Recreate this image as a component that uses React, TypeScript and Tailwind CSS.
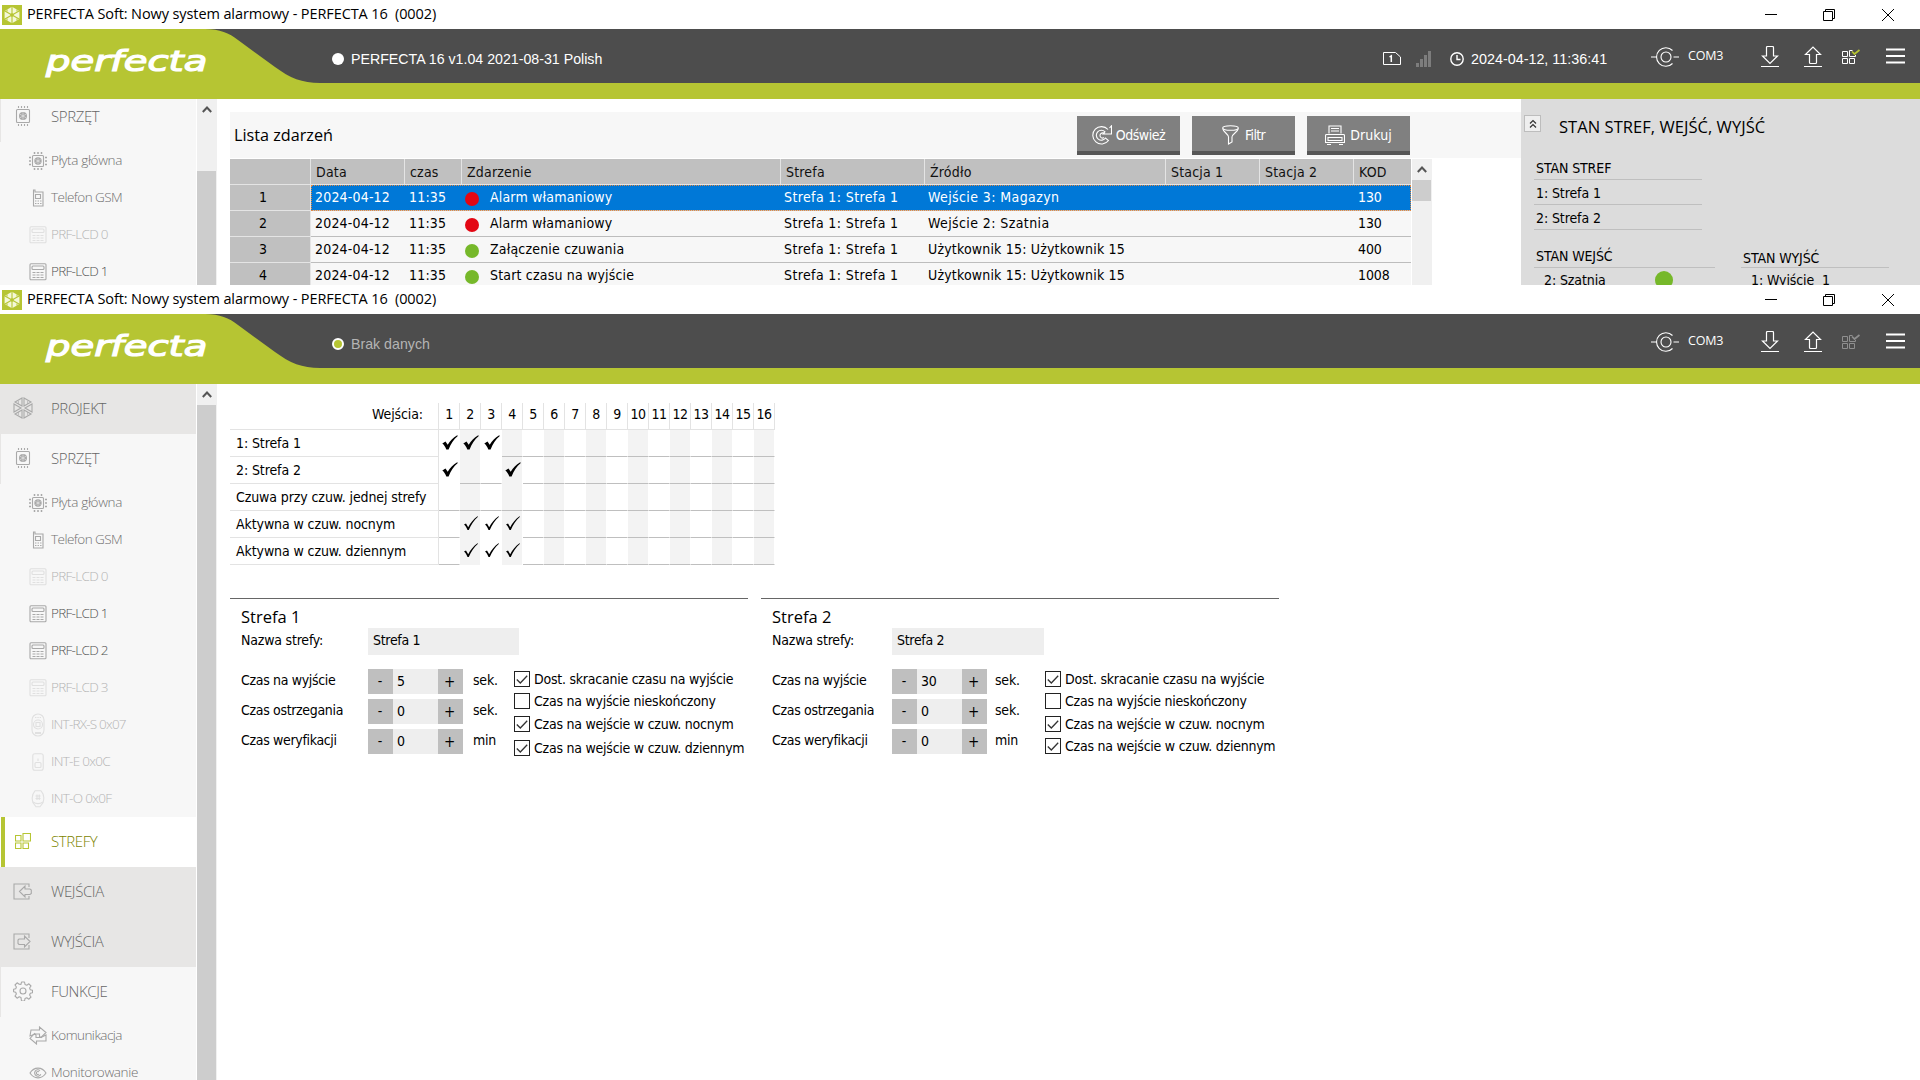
import React from 'react';

type IconProps = { className?: string };
type Kind =
  | 'project' | 'chip' | 'board' | 'phone' | 'keypad' | 'remote' | 'expIn' | 'expOut'
  | 'zones' | 'inputs' | 'outputs' | 'gear' | 'comm' | 'eye';

const TAHOMA = "font-['DejaVu_Sans_Condensed','DejaVu_Sans',sans-serif]";
const SEGOE = "font-['Open_Sans','Noto_Sans',sans-serif]";
const ARIAL = "font-['Liberation_Sans',Arial,sans-serif]";

function AppIcon() {
  return (
    <svg viewBox="0 0 20 20" className="h-5 w-5 shrink-0">
      <rect width="20" height="20" fill="#b6c533" />
      <path d="M10 1.8 17.4 6v8L10 18.2 2.6 14V6z" fill="#f4f8d8" />
      <g stroke="#b6c533" strokeWidth="1.1">
        <path d="M10 1v18M2 5.5l16 9M18 5.5l-16 9" />
      </g>
      <circle cx="10" cy="10" r="1.8" fill="#b6c533" />
      <path d="M5 4.5v2M15 4.5v2M5 13.5v2M15 13.5v2" stroke="#b6c533" />
    </svg>
  );
}

function SideIcon({ kind, className = '' }: IconProps & { kind: Kind }) {
  const common = { fill: 'none', stroke: 'currentColor', strokeWidth: 1.1 };
  switch (kind) {
    case 'project':
      return (
        <svg viewBox="0 0 20 22" className={`h-[22px] w-5 ${className}`} {...common}>
          <path d="M9 1v8L2 5zM11 1v8l7-4zM1 7l7 4-7 4zM19 7l-7 4 7 4zM9 21v-8l-7 4zM11 21v-8l7 4z" />
          <path d="M5.500 4v3M14.500 4v3M5.500 15v3M14.500 15v3" strokeWidth=".6" />
        </svg>
      );
    case 'chip':
      return (
        <svg viewBox="0 0 20 20" className={`h-5 w-5 ${className}`} {...common}>
          <rect x="3.500" y="3.500" width="13" height="13" rx="1" />
          <circle cx="10" cy="10" r="4" fill="currentColor" stroke="none" />
          <path d="M10 6.400v7.200M6.900 8.200l6.200 3.600M13.100 8.200l-6.200 3.600" stroke="#f7f7f7" strokeWidth=".5" />
          <path d="M5.500 0v2M8.500 0v2M11.500 0v2M14.500 0v2M5.500 18v2M8.500 18v2M11.500 18v2M14.500 18v2" />
        </svg>
      );
    case 'board':
      return (
        <svg viewBox="0 0 18 18" className={`h-[18px] w-[18px] ${className}`} {...common}>
          <rect x="3.500" y="3.500" width="11" height="11" rx="1" />
          <circle cx="9" cy="9" r="3.700" fill="currentColor" stroke="none" />
          <path d="M9 6v6M6.500 7.500l5 3M11.500 7.500l-5 3" stroke="#f7f7f7" strokeWidth=".5" />
          <path d="M5.500 0v2M9 0v2M12.500 0v2M5.500 16v2M9 16v2M12.500 16v2M0 5.500h2M0 9h2M0 12.500h2M16 5.500h2M16 9h2M16 12.500h2" strokeWidth="1.500" />
        </svg>
      );
    case 'phone':
      return (
        <svg viewBox="0 0 12 18" className={`h-[18px] w-3 ${className}`} {...common}>
          <path d="M1.500 17V1h1.500v2h8v14z" />
          <path d="M3.500 5.500h5v4h-5zM3 12h6.500M3 14.500h6.500" />
          <path d="M5 11v5M7.500 11v5" stroke="#f7f7f7" />
        </svg>
      );
    case 'keypad':
      return (
        <svg viewBox="0 0 18 18" className={`h-[18px] w-[18px] ${className}`} {...common}>
          <rect x="1" y=".8" width="16" height="16" rx="1" />
          <rect x="3" y="3" width="12" height="3.500" rx="1" />
          <path d="M3.500 9.500h11M3.500 12h11M3.500 14.500h11" strokeDasharray="3 1" />
        </svg>
      );
    case 'remote':
      return (
        <svg viewBox="0 0 14 24" className={`h-6 w-3.5 ${className}`} {...common}>
          <rect x="1" y="1" width="12" height="22" rx="6" />
          <circle cx="7" cy="11.500" r="4.500" />
          <rect x="5" y="9.500" width="4" height="4" />
          <path d="M4 4.500h6" strokeDasharray="1.500 .8" />
          <path d="M4 20h6" strokeWidth="2" />
        </svg>
      );
    case 'expIn':
      return (
        <svg viewBox="0 0 12 18" className={`h-[18px] w-3 ${className}`} {...common}>
          <rect x=".8" y=".8" width="10.400" height="16.400" rx="2" />
          <rect x="3" y="9.500" width="6" height="5" rx="1" />
          <path d="M6 5.500v2.500" />
        </svg>
      );
    case 'expOut':
      return (
        <svg viewBox="0 0 14 18" className={`h-[18px] w-3.5 ${className}`} {...common}>
          <path d="M4 .8h6c3 3 3.200 8 2 12l-3 4H5l-3-4C.8 9 1 4 4 .800z" />
          <path d="M2 12c3 2 7 2 10 0M4.500 6h5M4.500 8.500h5M6 4.500v5.500M8.200 4.500v5.500" />
        </svg>
      );
    case 'zones':
      return (
        <svg viewBox="0 0 16 16" className={`h-4 w-4 ${className}`} {...common}>
          <path d="M.5 2.500h5.500v5.500H.5zM8 .5h7.500v7.500H8zM.5 10h5.500v5.500H.5zM8 10h5.500v5.500H8z" />
        </svg>
      );
    case 'inputs':
      return (
        <svg viewBox="0 0 19 17" className={`h-[17px] w-[19px] ${className}`} {...common}>
          <path d="M16 4V1H1v15h15v-3" />
          <path d="M6.500 8.500 12 3v3h5l1.300 1v3.500L17 11.500h-5V14z" />
        </svg>
      );
    case 'outputs':
      return (
        <svg viewBox="0 0 19 17" className={`h-[17px] w-[19px] ${className}`} {...common}>
          <path d="M16 5V1H1v15h15v-4" />
          <path d="M17 8.500 11.500 3v3H6L5 7v3.500l1 1h5.500V14z" />
        </svg>
      );
    case 'gear':
      return (
        <svg viewBox="0 0 20 20" className={`h-5 w-5 ${className}`} {...common} strokeLinejoin="round">
          <circle cx="10" cy="10" r="3" />
          <path d="M8.500 1h3l.5 2.400 1.800.8 2.100-1.400 2.100 2.200-1.400 2 .7 1.700 2.200.6v2.400l-2.200.6-.7 1.700 1.400 2-2.100 2.200-2.100-1.400-1.800.8-.5 2.400h-3L8 16.600l-1.800-.8-2.100 1.400L2 15l1.400-2-.7-1.700L.600 10.700V8.300l2.100-.6.7-1.700L2 4l2.100-2.200 2.100 1.400L8 3.400z" />
        </svg>
      );
    case 'comm':
      return (
        <svg viewBox="0 0 18 19" className={`h-[19px] w-[18px] ${className}`} {...common}>
          <path d="M1 10 2 4h8.500V1L17 6.500l-5 5-1.500-1V8H6z" />
          <path d="M17 9v6H7.500v3L1 12.500l4.500-5L7 9v2.500h5z" />
        </svg>
      );
    default:
      return (
        <svg viewBox="0 0 18 12" className={`h-3 w-[18px] ${className}`} {...common}>
          <path d="M1 6c4-6.500 12-6.500 16 0-4 6.500-12 6.500-16 0z" />
          <path d="M11 3.600a3.200 3.200 0 1 0 .8 3.600M10 5a1.500 1.500 0 1 0 0 2" />
        </svg>
      );
  }
}

function TitleBar() {
  return (
    <div className="flex h-[29px] shrink-0 items-center bg-white pl-[2px] pr-[26px]">
      <AppIcon />
      <span className={`${SEGOE} ml-[5px] whitespace-pre pb-px text-[14.500px] tracking-[-0.100px] text-black`}>
        {'PERFECTA Soft: Nowy system alarmowy - PERFECTA 16  (0002)'}
      </span>
      <div className="ml-auto flex items-center">
        <svg viewBox="0 0 12 12" className="h-3 w-3" stroke="#000" fill="none">
          <path d="M0 5.500h12" />
        </svg>
        <svg viewBox="0 0 12 12" className="ml-[46px] h-3 w-3" stroke="#000" fill="none">
          <path d="M.5 2.500h9v9h-9zM2.500 2.500v-2h9v9h-2" />
        </svg>
        <svg viewBox="0 0 12 12" className="ml-[47px] h-3 w-3" stroke="#000" fill="none">
          <path d="M0 0l12 12M12 0 0 12" />
        </svg>
      </div>
    </div>
  );
}

function Header({ online }: { online: boolean }) {
  return (
    <div className="shrink-0">
      <div className="relative flex h-[54px] bg-[#4d4d4d] pr-[15px] text-white">
        <svg viewBox="0 0 320 54" className="absolute left-0 top-0 h-[54px] w-[320px]">
          <path d="M0 0H205C220 0 229 4 238 11L275 38C290 49 302 54 320 54H0z" fill="#b6c533" />
        </svg>
        <div className="relative w-[332px] pl-[46px]">
          <span className="block origin-left scale-x-[1.330] pt-[14px] font-['DejaVu_Sans',sans-serif] text-[29px] italic leading-[36px] [-webkit-text-stroke:1.200px_#fff]">
            perfecta
          </span>
        </div>
        <div className="flex items-center pt-[6px]">
          <span
            className={
              online
                ? 'h-3 w-3 rounded-full bg-white'
                : 'h-3 w-3 rounded-full border-2 border-white bg-[#b6c533]'
            }
          />
          <span className={`${ARIAL} ml-[7px] pt-px text-[14.200px] ${online ? 'text-white' : 'text-[#b4b4b4]'}`}>
            {online ? 'PERFECTA 16 v1.04 2021-08-31 Polish' : 'Brak danych'}
          </span>
        </div>
        <div className="ml-auto flex items-center">
          {online && (
            <div className="mr-[44px] flex items-center pt-[6px]">
              <svg viewBox="0 0 18 13" className="h-[13px] w-[18px]" fill="none" stroke="#fff">
                <path d="M.5.500h12l5 4.500v7.500H.5z" />
                <path d="M6.500 5 8.300 3.800V10" strokeWidth="1.500" />
              </svg>
              <svg viewBox="0 0 15 16" className="ml-[15px] h-4 w-[15px]" fill="#7d7d7d">
                <path d="M0 12h3v4H0zM4 8h3v8H4zM8 4h3v12H8zM12 0h3v16h-3z" />
              </svg>
              <svg viewBox="0 0 14 14" className="ml-[19px] h-3.5 w-3.5" fill="none" stroke="#fff" strokeWidth="1.400">
                <circle cx="7" cy="7" r="6.200" />
                <path d="M7 3v4.500h3.500" />
              </svg>
              <span className={`${ARIAL} ml-[7px] w-[136px] whitespace-nowrap pt-px text-[14.350px]`}>
                2024-04-12, 11:36:41
              </span>
            </div>
          )}
          <svg viewBox="0 0 28 20" className="mt-0.5 h-5 w-7" fill="none" stroke="#fff" strokeWidth="1.100">
            <circle cx="15" cy="10" r="5" />
            <path d="M0 10h5.500M22.500 10H28M21.500 3.500A9.300 9.300 0 1 0 21.500 16.500" />
          </svg>
          <span className={`${SEGOE} ml-[9px] w-[36px] text-[12.500px] tracking-[-0.200px]`}>COM3</span>
          <svg viewBox="0 0 18 21" className="ml-[37px] mt-px h-[21px] w-[18px]" fill="none" stroke="#fff" strokeWidth="1.200">
            <path d="M5.500 1.500q0-1 1-1h5q1 0 1 1v8.500h4L9 17.500 1.500 10h4zM0 20.500h18" />
          </svg>
          <svg viewBox="0 0 18 21" className="ml-[25px] mt-px h-[21px] w-[18px]" fill="none" stroke="#fff" strokeWidth="1.200">
            <path d="M5.500 16.500q0 1 1 1h5q1 0 1-1V8.500h4L9 1 1.500 8.500h4zM0 20.500h18" />
          </svg>
          <svg viewBox="0 0 18 16" className="ml-[20px] mt-px h-4 w-[18px]" fill="none" stroke={online ? '#fff' : '#8f8f8f'}>
            <path d="M.5 2.500h5v5h-5zM13.500 6v1.500h-6v-6h3M.5 9.500h5v5h-5zM7.500 9.500h5v5h-5z" />
            <path d="M10 2.500l2.500 2.500 5-4" stroke={online ? '#b6c533' : '#8f8f8f'} strokeWidth="1.700" />
          </svg>
          <svg viewBox="0 0 19 16" className="ml-[26px] h-4 w-[19px]" stroke="#fff" strokeWidth="1.800">
            <path d="M0 1.500h19M0 8h19M0 14.500h19" />
          </svg>
        </div>
      </div>
      <div className="h-4 bg-[#b6c533]" />
    </div>
  );
}

type RowStyle = 'collapsed' | 'expanded' | 'active';

function SideSection({ kind, label, look }: { kind: Kind; label: string; look: RowStyle }) {
  const box =
    look === 'collapsed'
      ? 'bg-[#e7e6e5] text-[#666] border-l border-[#e7e6e5]'
      : look === 'expanded'
        ? 'bg-[#f7f7f7] text-[#666] border-l border-[#e7e6e5]'
        : 'bg-white text-[#7c8400] border-l border-white';
  return (
    <div className={`flex h-[50px] items-center ${box}`}>
      <div className={`h-full w-1 ${look === 'active' ? 'bg-[#b6c533]' : ''}`} />
      <div
        className={`flex w-[37px] justify-center pb-0.5 pr-[2px] ${look === 'active' ? 'text-[#b6c533]' : 'text-[#a9a9a9]'}`}
      >
        <SideIcon kind={kind} />
      </div>
      <span className={`${SEGOE} ml-[9px] pb-0.5 text-[15px] font-light tracking-[-0.400px]`}>{label}</span>
    </div>
  );
}

type Item = { kind: Kind; label: string; dim?: boolean; dark?: boolean; track: string };

function SideItem({ kind, label, dim, dark, track }: Item) {
  return (
    <div className="flex h-[37px] items-center bg-[#f7f7f7]">
      <div className={`ml-[28px] flex w-[20px] justify-center ${dim ? 'text-[#e0e0e0]' : 'text-[#a9a9a9]'}`}>
        <SideIcon kind={kind} />
      </div>
      <span
        className={`${SEGOE} ${track} ml-[3px] whitespace-nowrap text-[13.500px] ${dim ? 'text-[#b4b4b4]' : dark ? 'text-[#505050]' : 'text-[#707070]'} font-light`}
      >
        {label}
      </span>
    </div>
  );
}

const HARDWARE: Item[] = [
  { kind: 'board', label: 'Płyta główna', track: 'tracking-[-0.350px]' },
  { kind: 'phone', label: 'Telefon GSM', track: 'tracking-[-0.550px]' },
  { kind: 'keypad', label: 'PRF-LCD 0', dim: true, track: 'tracking-[-0.700px]' },
  { kind: 'keypad', label: 'PRF-LCD 1', dark: true, track: 'tracking-[-0.700px]' },
  { kind: 'keypad', label: 'PRF-LCD 2', dark: true, track: 'tracking-[-0.700px]' },
  { kind: 'keypad', label: 'PRF-LCD 3', dim: true, track: 'tracking-[-0.700px]' },
  { kind: 'remote', label: 'INT-RX-S 0x07', dim: true, track: 'tracking-[-0.780px]' },
  { kind: 'expIn', label: 'INT-E 0x0C', dim: true, track: 'tracking-[-0.700px]' },
  { kind: 'expOut', label: 'INT-O 0x0F', dim: true, track: 'tracking-[-0.700px]' },
];

function ScrollBar({ thumb }: { thumb: string }) {
  return (
    <div className="flex h-full w-5 shrink-0 flex-col bg-[#f0f0f0]">
      <div className="flex h-[21px] shrink-0 items-center justify-center pr-px">
        <svg viewBox="0 0 10 7" className="h-[7px] w-[10px]" fill="none" stroke="#555" strokeWidth="2">
          <path d="M.8 6 5 1.500 9.200 6" />
        </svg>
      </div>
      <div className={`w-[19px] bg-[#cdcdcd] ${thumb}`} />
    </div>
  );
}

type Event = { color: string; name: string; source: string; code: string };
const EVENTS: Event[] = [
  { color: 'bg-[#e30613]', name: 'Alarm włamaniowy', source: 'Wejście 3: Magazyn', code: '130' },
  { color: 'bg-[#e30613]', name: 'Alarm włamaniowy', source: 'Wejście 2: Szatnia', code: '130' },
  { color: 'bg-[#76b82a]', name: 'Załączenie czuwania', source: 'Użytkownik 15: Użytkownik 15', code: '400' },
  { color: 'bg-[#76b82a]', name: 'Start czasu na wyjście', source: 'Użytkownik 15: Użytkownik 15', code: '1008' },
];
const COLS = 'grid grid-cols-[80px_94px_57px_319px_144px_241px_94px_94px_58px]';

function ToolButton({ label, track, children }: { label: string; track: string; children: React.ReactNode }) {
  return (
    <div className="flex h-[39px] w-[103px] items-center justify-center gap-1 border-b-4 border-[#575757] bg-[#808080] pt-[3px] text-white">
      {children}
      <span className={`${TAHOMA} ${track} pt-px text-[14px]`}>{label}</span>
    </div>
  );
}

function EventTable() {
  return (
    <div className={`${TAHOMA} mt-px flex text-[14px] tracking-[0.180px] text-black`}>
      <div className="w-[1181px]">
        <div className={`${COLS} h-[26px] items-stretch border-b border-[#e4e4e4] bg-[#c0c0c0] text-[#111]`}>
          {['', 'Data', 'czas', 'Zdarzenie', 'Strefa', 'Źródło', 'Stacja 1', 'Stacja 2', 'KOD'].map((h, i) => (
            <div key={i} className={`flex items-center pl-[5px] pt-0.5 ${i ? 'border-l border-[#e4e4e4]' : ''}`}>
              {h}
            </div>
          ))}
        </div>
        {EVENTS.map((e, i) => (
          <div key={i} className={`flex h-[26px] ${i === 0 ? 'text-white' : ''}`}>
            <div className="flex w-[81px] items-center justify-center border-b border-r border-[#e4e4e4] bg-[#c0c0c0] pr-[14px] text-black">
              {i + 1}
            </div>
            <div
              className={`grid w-[1100px] grid-cols-[93px_57px_319px_144px_241px_94px_94px_58px] items-center border-b border-[#bdbdbd] ${
                i === 0 ? 'bg-[#0078d7] outline-1 -outline-offset-1 outline-dotted outline-[#e08a45]' : 'bg-[#f7f7f7]'
              }`}
            >
              <span className="pl-[4px]">2024-04-12</span>
              <span className="pl-[5px]">11:35</span>
              <span className="flex items-center pl-[5px]">
                <i className={`mr-[11px] -ml-px mt-0.5 h-3.5 w-3.5 rounded-full ${e.color}`} />
                {e.name}
              </span>
              <span className="pl-[4px] tracking-[0.380px]">Strefa 1: Strefa 1</span>
              <span className={`pl-[4px] ${i < 2 ? 'tracking-[0.400px]' : ''}`}>{e.source}</span>
              <span />
              <span />
              <span className="pl-[5px] tracking-[-0.100px]">{e.code}</span>
            </div>
          </div>
        ))}
      </div>
      <div className="ml-px h-[130px]">
        <ScrollBar thumb="h-[21px]" />
      </div>
    </div>
  );
}

function StatusPanel() {
  return (
    <aside className={`${TAHOMA} w-[399px] shrink-0 bg-[#dcdcdc] text-[14px] tracking-[-0.100px] text-black`}>
      <div className="flex items-start pl-[3px] pt-4">
        <div className="flex h-[17px] w-[17px] items-center justify-center border border-[#bdbdbd] bg-[#efefef]">
          <svg viewBox="0 0 8 10" className="h-[10px] w-2" fill="none" stroke="#333" strokeWidth="1.200">
            <path d="M1 4.500 4 1.500l3 3M1 8.500l3-3 3 3" />
          </svg>
        </div>
        <span className={`${SEGOE} ml-[18px] text-[16.500px] leading-6 tracking-[0.050px]`}>STAN STREF, WEJŚĆ, WYJŚĆ</span>
      </div>
      <div className="ml-[13px] mt-[16px] w-[168px]">
        {['STAN STREF', '1: Strefa 1', '2: Strefa 2'].map((t) => (
          <div key={t} className="flex h-[25px] items-center border-b border-[#bfbfbf] pl-0.5 pt-[2px]">
            {t}
          </div>
        ))}
      </div>
      <div className="mt-[12px] flex">
        <div className="ml-[13px] w-[181px]">
          <div className="flex h-[26px] items-center border-b border-[#bfbfbf] pl-0.5 pt-[3px]">STAN WEJŚĆ</div>
          <div className="flex h-[17px] items-start pl-[10px] leading-[24px]">
            2: Szatnia
            <i className="ml-auto mr-[42px] mt-[3px] h-[18px] w-[18px] rounded-full bg-[#76b82a]" />
          </div>
        </div>
        <div className="ml-[26px] w-[148px]">
          <div className="flex h-[26px] items-center border-b border-[#bfbfbf] pl-0.5 pt-[7px]">STAN WYJŚĆ</div>
          <div className="h-[17px] whitespace-pre pl-[10px] leading-[24px]">{'1: Wyjście  1'}</div>
        </div>
      </div>
    </aside>
  );
}

function EventWindow() {
  return (
    <section className="flex h-[285px] flex-col overflow-hidden bg-white">
      <TitleBar />
      <Header online />
      <div className="flex h-[186px]">
        <nav className="h-full w-[196px] overflow-hidden bg-[#f7f7f7]">
          <div className="-mt-[7px]">
            <SideSection kind="chip" label="SPRZĘT" look="expanded" />
            {HARDWARE.slice(0, 4).map((it) => (
              <SideItem key={it.label} {...it} />
            ))}
          </div>
        </nav>
        <div className="ml-px">
          <ScrollBar thumb="mt-[51px] grow" />
        </div>
        <div className="ml-[13px] flex-1 pt-[13px]">
          <div className="flex h-[46px] bg-[#f7f7f7] pl-1 pt-1">
            <span className={`${SEGOE} pt-[7px] text-[16.200px] leading-6 text-black`}>Lista zdarzeń</span>
            <div className="ml-auto mr-[111px] flex gap-3">
              <ToolButton label="Odśwież" track="tracking-[-0.450px]">
                <svg viewBox="0 0 20 20" className="h-5 w-5" fill="none" stroke="#fff" strokeWidth="1.100">
                  <path d="M16 4.500A8.700 8.700 0 1 0 16.500 15.500L13.500 13A5 5 0 1 1 13 6.800L11 9h8.500V.800L17.500 3" />
                  <path d="M12.500 9a2.500 2.500 0 1 0-.5 3.500" />
                </svg>
              </ToolButton>
              <ToolButton label="Filtr" track="tracking-[-0.700px] ml-0.5">
                <svg viewBox="0 0 17 20" className="h-5 w-[17px]" fill="none" stroke="#fff" strokeWidth="1.100">
                  <ellipse cx="8.500" cy="3" rx="7.800" ry="2.300" />
                  <path d="M.7 3.500C1 7 6.500 9 6.500 12v7l3.500-2v-5c0-3 6-5 6.300-8.500" />
                </svg>
              </ToolButton>
              <ToolButton label="Drukuj" track="tracking-[0.050px] ml-[1px]">
                <svg viewBox="0 0 20 20" className="h-5 w-5" fill="none" stroke="#fff" strokeWidth="1.100">
                  <path d="M4 8.500V1h12v7.500M6 3.500h8M6 6h8M1.500 9.500h17q1 0 1 1v7h-19v-7q0-1 1-1zM3 12.500h14v3H3zM2 19.500h4M14 19.500h4" />
                </svg>
              </ToolButton>
            </div>
          </div>
          <EventTable />
        </div>
        <StatusPanel />
      </div>
    </section>
  );
}

const MATRIX: { label: string; checks: number[]; thin?: boolean }[] = [
  { label: '1: Strefa 1', checks: [1, 2, 3] },
  { label: '2: Strefa 2', checks: [1, 4] },
  { label: 'Czuwa przy czuw. jednej strefy', checks: [] },
  { label: 'Aktywna w czuw. nocnym', checks: [2, 3, 4], thin: true },
  { label: 'Aktywna w czuw. dziennym', checks: [2, 3, 4], thin: true },
];
const INPUTS = Array.from({ length: 16 }, (_, i) => i + 1);

function Check({ thin }: { thin?: boolean }) {
  return (
    <svg viewBox="0 0 16 15" className="h-[15px] w-4 shrink-0" fill="#000">
      {thin ? (
        <path d="M1 8.600 3 7.500 5.200 11.200C7.500 6.800 10.500 3.200 14.500.300l.5.500C11 4.300 8 8.800 5.800 14H4.500C3.500 11.500 2.500 10 1 8.600z" />
      ) : (
        <path d="M.3 8.600 3.500 6.500 5.700 9.800C8 5.800 11 2.500 15.200.200l.6.800C11.500 4.500 8.800 9 6.600 14.500H4.300C3.300 11.700 2 10 .3 8.600z" />
      )}
    </svg>
  );
}

function InputMatrix() {
  return (
    <div className="w-fit text-[14px] tracking-[-0.100px]">
      <div className="flex h-[27px]">
        <div className="flex w-[208px] items-center justify-end border-b border-[#e3e3e3] pb-[3px] pr-[15px]">Wejścia:</div>
        <div className="flex border-r border-[#e3e3e3]">
          {INPUTS.map((n) => (
            <div
              key={n}
              className="flex w-[21px] items-center justify-center border-b border-l border-[#e3e3e3] pb-[3px] tracking-[-0.400px]"
            >
              {n}
            </div>
          ))}
        </div>
      </div>
      {MATRIX.map((row) => (
        <div key={row.label} className="flex h-[27px]">
          <div className="flex w-[208px] items-center whitespace-nowrap border-b border-[#e3e3e3] pl-[6px]">{row.label}</div>
          <div className="flex border-l border-[#e3e3e3]">
            {INPUTS.map((n) => {
              const on = row.checks.includes(n);
              return (
                <div
                  key={n}
                  className={`flex w-[21px] justify-center border-r border-r-white pl-px pt-[5px] ${n % 2 === 0 ? 'bg-[#f3f3f3]' : 'bg-white'} ${on ? '' : 'border-b border-b-[#bfbfbf]'}`}
                >
                  {on && <Check thin={row.thin} />}
                </div>
              );
            })}
          </div>
        </div>
      ))}
    </div>
  );
}

function Stepper({ value }: { value: string }) {
  return (
    <div className="flex h-[25px] w-[95px] shrink-0">
      <span className="flex w-[25px] items-center justify-center bg-[#bfbfbf] pr-px">-</span>
      <span className="flex w-[45px] items-center bg-[#eee] pl-[4px]">{value}</span>
      <span className="flex w-[25px] items-center justify-center bg-[#bfbfbf] pr-0.5 pt-0.5 text-[15px]">+</span>
    </div>
  );
}

function CheckBox({ on, label, gap }: { on: boolean; label: string; gap: string }) {
  return (
    <div className={`flex h-4 items-center ${gap}`}>
      <span className="flex h-4 w-4 shrink-0 items-center justify-center border border-[#222] bg-white">
        {on && (
          <svg viewBox="0 0 12 9" className="h-[9px] w-3" fill="none" stroke="#333" strokeWidth="1.300">
            <path d="M.8 4.500 4.300 8 11.200.800" />
          </svg>
        )}
      </span>
      <span className="ml-1 whitespace-nowrap tracking-[-0.240px]">{label}</span>
    </div>
  );
}

type Zone = { name: string; exit: string; labelW: string; inputW: string; unit: string; lastGap: string };
const ZONES: Zone[] = [
  { name: 'Strefa 1', exit: '5', labelW: 'w-[127px]', inputW: 'w-[151px]', unit: 'pl-[10px]', lastGap: 'mt-2' },
  { name: 'Strefa 2', exit: '30', labelW: 'w-[120px]', inputW: 'w-[152px]', unit: 'pl-[8px]', lastGap: 'mt-[6px]' },
];

function ZoneCard({ zone }: { zone: Zone }) {
  const rows: [string, string, string][] = [
    ['Czas na wyjście', zone.exit, 'sek.'],
    ['Czas ostrzegania', '0', 'sek.'],
    ['Czas weryfikacji', '0', 'min'],
  ];
  return (
    <div className="w-[518px] border-t border-[#666] pl-[11px] pt-[6px] text-[14px] tracking-[-0.200px]">
      <h2 className={`${SEGOE} h-[23px] text-[16.500px] leading-[23px] tracking-normal`}>{zone.name}</h2>
      <div className="flex h-[27px]">
        <span className={`${zone.labelW} pt-[2px]`}>Nazwa strefy:</span>
        <span className={`${zone.inputW} bg-[#eee] pl-[5px] pt-[2px] tracking-[-0.300px]`}>{zone.name}</span>
      </div>
      <div className="mt-3.5 flex">
        <div className="flex w-[273px] shrink-0 flex-col gap-[5px]">
          {rows.map(([label, value, unit]) => (
            <div key={label} className="flex h-[25px] items-center">
              <span className={`${zone.labelW} shrink-0 pb-[3px] tracking-[-0.330px]`}>{label}</span>
              <Stepper value={value} />
              <span className={`${zone.unit} pb-[3px]`}>{unit}</span>
            </div>
          ))}
        </div>
        <div className="pt-[2px]">
          <CheckBox on label="Dost. skracanie czasu na wyjście" gap="" />
          <CheckBox on={false} label="Czas na wyjście nieskończony" gap="mt-[6px]" />
          <CheckBox on label="Czas na wejście w czuw. nocnym" gap="mt-[7px]" />
          <CheckBox on label="Czas na wejście w czuw. dziennym" gap={zone.lastGap} />
        </div>
      </div>
    </div>
  );
}

function ZonesWindow() {
  return (
    <section className="flex h-[795px] flex-col overflow-hidden bg-white">
      <TitleBar />
      <Header online={false} />
      <div className="flex min-h-0 flex-1">
        <nav className="h-full w-[196px] shrink-0 overflow-hidden bg-[#f7f7f7]">
          <SideSection kind="project" label="PROJEKT" look="collapsed" />
          <SideSection kind="chip" label="SPRZĘT" look="expanded" />
          {HARDWARE.map((it) => (
            <SideItem key={it.label} {...it} />
          ))}
          <SideSection kind="zones" label="STREFY" look="active" />
          <SideSection kind="inputs" label="WEJŚCIA" look="collapsed" />
          <SideSection kind="outputs" label="WYJŚCIA" look="collapsed" />
          <SideSection kind="gear" label="FUNKCJE" look="expanded" />
          <SideItem kind="comm" label="Komunikacja" track="tracking-[-0.550px]" />
          <SideItem kind="eye" label="Monitorowanie" track="tracking-[-0.350px]" />
        </nav>
        <div className="ml-px">
          <ScrollBar thumb="grow" />
        </div>
        <main className={`${TAHOMA} ml-[13px] flex-1 pt-[19px] text-black`}>
          <InputMatrix />
          <div className="mt-[33px] flex gap-[13px]">
            {ZONES.map((z) => (
              <ZoneCard key={z.name} zone={z} />
            ))}
          </div>
        </main>
      </div>
    </section>
  );
}

export default function App() {
  return (
    <div className="h-[1080px] w-[1920px] overflow-hidden bg-white">
      <EventWindow />
      <ZonesWindow />
    </div>
  );
}
